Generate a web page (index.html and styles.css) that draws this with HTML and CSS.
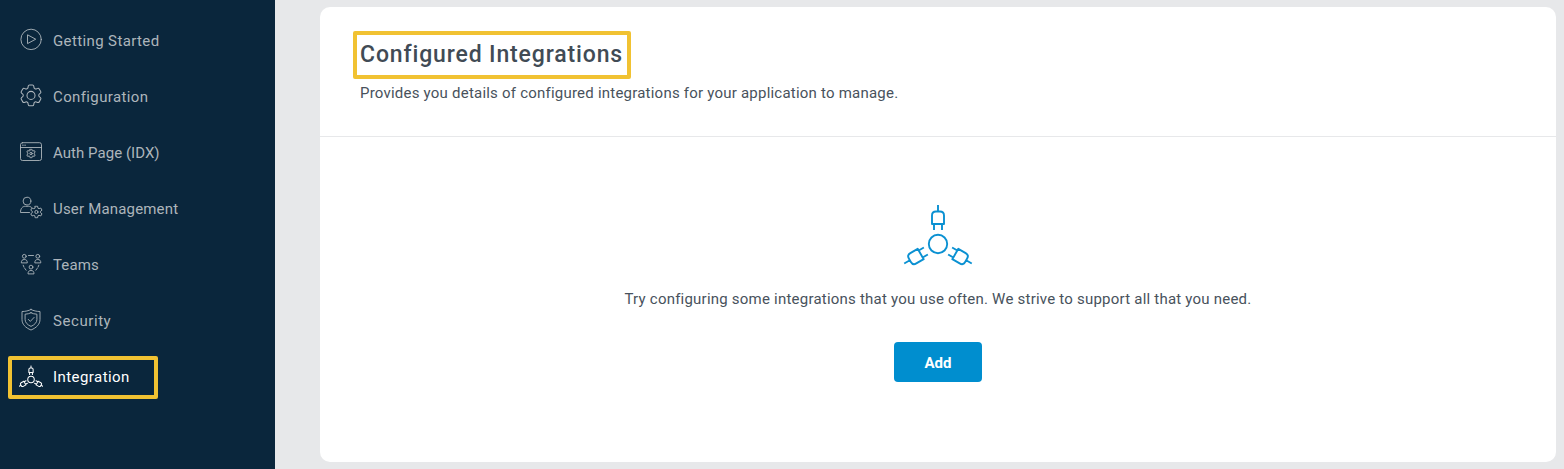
FILE: index.html
```html
<!DOCTYPE html>
<html lang="en">
<head>
<meta charset="utf-8">
<title>Configured Integrations</title>
<link rel="stylesheet" href="styles.css">
</head>
<body>
<svg class="defs" aria-hidden="true">
  <symbol id="gear" viewBox="2 2 20 20">
    <path d="M9.594 3.94c.09-.542.56-.94 1.11-.94h2.593c.55 0 1.02.398 1.11.94l.213 1.281c.063.374.313.686.645.87.074.04.147.083.22.127.325.196.72.257 1.075.124l1.217-.456a1.125 1.125 0 0 1 1.37.49l1.296 2.247a1.125 1.125 0 0 1-.26 1.431l-1.003.827c-.293.241-.438.613-.43.992a7.723 7.723 0 0 1 0 .255c-.008.378.137.75.43.991l1.004.827c.424.35.534.955.26 1.43l-1.298 2.247a1.125 1.125 0 0 1-1.369.491l-1.217-.456c-.355-.133-.75-.072-1.076.124a6.47 6.47 0 0 1-.22.128c-.331.183-.581.495-.644.869l-.213 1.281c-.09.543-.56.94-1.11.94h-2.594c-.55 0-1.019-.398-1.11-.94l-.213-1.281c-.062-.374-.312-.686-.644-.87a6.52 6.52 0 0 1-.22-.127c-.325-.196-.72-.257-1.076-.124l-1.217.456a1.125 1.125 0 0 1-1.369-.49l-1.297-2.247a1.125 1.125 0 0 1 .26-1.431l1.004-.827c.292-.24.437-.613.43-.991a6.932 6.932 0 0 1 0-.255c.007-.38-.138-.751-.43-.992l-1.004-.827a1.125 1.125 0 0 1-.26-1.43l1.297-2.247a1.125 1.125 0 0 1 1.37-.491l1.216.456c.356.133.751.072 1.076-.124.072-.044.146-.086.22-.128.332-.183.582-.495.644-.869l.214-1.28Z"/>
    <circle cx="12" cy="12" r="3.5"/>
  </symbol>
  <symbol id="cog" viewBox="-11 -11 22 22">
    <path d="M-2-9.500H2L2.600-6.200 4.330-5.500 7.230-6.480 9.230-3.020 6.700-1V1L9.230 3.020 7.230 6.480 4.330 5.500 2.600 6.200 2 9.500H-2L-2.600 6.200-4.330 5.500-7.230 6.480-9.230 3.020-6.700 1V-1L-9.230-3.020-7.230-6.480-4.330-5.500-2.600-6.200z"/>
    <circle r="2.600"/>
  </symbol>
  <symbol id="plugs" viewBox="-36 -40 72 62">
    <circle r="9.200"/>
    <g id="plug"><path d="M0-39v6.500M-6-20v-8.500q0-4 4-4h4q4 0 4 4v8.500zM-4-20v6M4-20v6"/></g>
    <use href="#plug" transform="rotate(120)"/>
    <use href="#plug" transform="rotate(240)"/>
  </symbol>
</svg>
<div class="app">
  <nav class="sidebar">
    <a class="item"><svg class="icon" viewBox="0 0 24 24"><circle cx="12.100" cy="11.400" r="10.200"/><path d="M8.500 7.200v8.400l7.900-4.200z"/></svg><span class="started">Getting Started</span></a>
    <a class="item"><svg class="icon" viewBox="0 0 24 24"><use href="#gear" x=".5" y="-.1" width="23" height="23"/></svg><span class="configuration">Configuration</span></a>
    <a class="item"><svg class="icon" viewBox="0 0 24 24"><rect x="1.500" y="2.700" width="21" height="17.800" rx="2"/><path d="M1.500 7.500h21M3.500 5.200h.8M5.700 5.200h.8"/><use class="mini" href="#cog" x="7" y="8.500" width="10" height="10"/></svg><span class="auth">Auth Page (IDX)</span></a>
    <a class="item"><svg class="icon" viewBox="0 0 24 24"><circle cx="8" cy="5.100" r="3.900"/><path d="M10.500 16.500H1.500c0-4 1.800-6.200 5-6.200h3c1.300 0 2.300.4 3 1.100"/><use class="small" href="#cog" x="10.700" y="9.300" width="13.400" height="13.400"/></svg><span class="users">User Management</span></a>
    <a class="item"><svg class="icon" viewBox="0 0 24 24"><circle cx="5.300" cy="4.300" r="1.900"/><circle cx="18.800" cy="4.300" r="1.900"/><circle cx="12" cy="15.100" r="1.900"/><path d="M2.300 10.500c0-2 1-3 3-3s3 1 3 3zM15.800 10.500c0-2 1-3 3-3s3 1 3 3zM9 21.500c0-2 1-3 3-3s3 1 3 3zM9.500 3.500h5M4.200 13.200l.8 2M5.800 16.400l1.300 1.800M19.800 13.200l-.8 2M18.200 16.400l-1.300 1.800"/></svg><span class="teams">Teams</span></a>
    <a class="item"><svg class="icon" viewBox="0 0 24 24"><path d="M12 1.500c2.500 1.300 5.500 2 9 2v8c0 4.700-3.500 8.300-9 10.500-5.500-2.200-9-5.800-9-10.500v-8c3.500 0 6.500-.7 9-2z"/><path d="M12 4.800c1.600.8 3.600 1.300 5.900 1.400v5.300c0 3-2.300 5.300-5.900 6.900-3.600-1.600-5.900-3.900-5.900-6.900V6.200c2.300-.1 4.300-.6 5.900-1.400zM9.300 11.400l2 2 3.800-4"/></svg><span class="security">Security</span></a>
    <a class="item active"><svg class="icon" viewBox="0 0 24 24"><use class="net" href="#plugs" x="-1" y=".3" width="26" height="22"/></svg><span class="integration">Integration</span></a>
  </nav>
  <main class="main">
    <section class="panel">
      <header class="head">
        <h1 class="title">Configured Integrations</h1>
        <p class="desc">Provides you details of configured integrations for your application to manage.</p>
      </header>
      <div class="empty">
        <svg class="art" viewBox="-36 -40 72 62"><use href="#plugs" x="-36" y="-40" width="72" height="62"/></svg>
        <p class="hint">Try configuring some integrations that you use often. We strive to support all that you need.</p>
        <button class="add">Add</button>
      </div>
    </section>
  </main>
</div>
</body>
</html>
```
FILE: styles.css
```css
* { box-sizing: border-box; }
body { margin: 0; font-family: Roboto, "Liberation Sans", sans-serif; font-size: 15px; color: #48525c; }
.defs { position: absolute; width: 0; height: 0; }
svg { fill: none; stroke: currentColor; stroke-linecap: round; stroke-linejoin: round; flex: none; }
.app { display: flex; height: 469px; background: #e7e8ea; overflow: hidden; }
.sidebar { width: 275px; flex: none; background: #0a263c; padding: 12px 8px; display: flex; flex-direction: column; }
.item { height: 56px; display: flex; align-items: center; padding-left: 11px; gap: 10px; color: #adb5bb; white-space: nowrap; line-height: 20px; }
.item span { padding-top: 2px; }
.started { letter-spacing: 0.38px; }
.configuration { letter-spacing: 0.38px; }
.auth { letter-spacing: 0.04px; }
.users { letter-spacing: 0.18px; }
.teams { letter-spacing: 0.1px; }
.security { letter-spacing: 0.57px; }
.integration { letter-spacing: 0.44px; }
.icon { width: 24px; height: 24px; stroke-width: 0.9; }
.icon .mini { stroke-width: 2; }
.icon .small { stroke-width: 1.5; }
.icon .net { stroke-width: 2.9; }
.item.active { width: 150px; height: 43px; margin-top: 8px; padding: 0 0 1px 7px; border: 4px solid #f1c232; border-radius: 2px; color: #fff; }
.item.active span { padding-top: 0; }
.main { flex: 1; padding: 7px 8px 7px 45px; display: flex; }
.panel { flex: 1; background: #fff; border-radius: 10px; display: flex; flex-direction: column; }
.head { height: 130px; padding: 24px 33px 0; border-bottom: 1px solid #e7e8ea; }
.title { width: 278px; height: 48px; margin: 0; border: 4px solid #f1c232; border-radius: 2px; padding-left: 3px; font-size: 23px; font-weight: 500; line-height: 39px; letter-spacing: 0.86px; white-space: nowrap; color: #414b55; }
.desc { margin: 3px 0 0 7px; line-height: 22px; letter-spacing: 0.22px; white-space: nowrap; }
.empty { flex: 1; display: flex; flex-direction: column; align-items: center; padding-top: 66.5px; }
.art { width: 72px; height: 62px; color: #0b91d2; stroke-width: 1.9; stroke-linecap: butt; }
.hint { margin: 22.5px 0 32px; line-height: 22px; letter-spacing: 0.22px; white-space: nowrap; }
.add { width: 88px; height: 40px; border: 0; border-radius: 4px; background: #008ecf; color: #fff; padding: 2px 0 0; font: 700 15px Roboto, sans-serif; }
```
